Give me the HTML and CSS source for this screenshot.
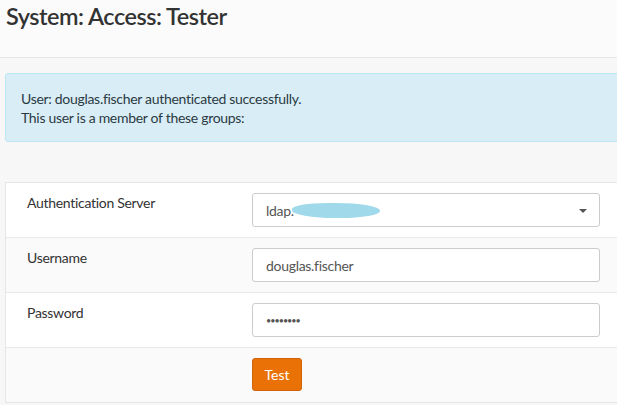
FILE: index.html
```html
<!DOCTYPE html>
<html lang="en">

<head>
    <meta charset="UTF-8">
    <meta name="viewport" content="width=device-width, initial-scale=1.0">
    <title>System: Access: Tester</title>
    <link rel="stylesheet" href="styles.css">
</head>

<body>
    <!-- page title bar -->
    <header class="page-head">
        <h1>System: Access: Tester</h1>
    </header>

    <main class="content">
        <!-- result message -->
        <div class="alert-info">
            User: douglas.fischer authenticated successfully.<br>
            This user is a member of these groups:
        </div>

        <!-- tester form -->
        <div class="form-card">
            <div class="form-row">
                <div class="form-label">Authentication Server</div>
                <div class="form-field">
                    <div class="select-box">
                        <span>ldap.</span><span class="smudge"></span>
                        <span class="caret"></span>
                    </div>
                </div>
            </div>
            <div class="form-row striped">
                <div class="form-label">Username</div>
                <div class="form-field">
                    <input type="text" class="text-input" value="douglas.fischer">
                </div>
            </div>
            <div class="form-row">
                <div class="form-label">Password</div>
                <div class="form-field">
                    <input type="password" class="text-input pass" value="12345678">
                </div>
            </div>
            <div class="form-row striped">
                <div class="form-label"></div>
                <div class="form-field">
                    <button type="button" class="btn-test">Test</button>
                </div>
            </div>
        </div>
    </main>
</body>

</html>
```

FILE: styles.css
```css
body {
    margin: 0;
    font-family: Lato, "Open Sans", Arial, sans-serif;
    font-size: 14px;
    letter-spacing: -0.3px;
    color: #333;
    background-color: #f7f7f7;
    overflow: hidden;
}

/* title bar */
.page-head {
    height: 57px;
    background-color: #fbfbfb;
    border-bottom: 1px solid #e6e6e6;
}

.page-head h1 {
    margin: 0;
    padding: 2px 0 0 6px;
    font-size: 23.5px;
    font-weight: 600;
    letter-spacing: -0.5px;
    line-height: 28px;
    color: #333;
}

.content {
    padding: 15px 0 0 5px;
    width: 660px;
}

.alert-info {
    background-color: #d9edf7;
    border: 1px solid #bce8f1;
    border-radius: 3px;
    padding: 15px 15px 20px 15px;
    line-height: 19px;
    color: #2b3a42;
    height: 32px;
}

/* form table */
.form-card {
    margin-top: 40px;
    background-color: #fff;
    border: 1px solid #e6e6e6;
    border-right: none;
}

.form-row {
    display: flex;
    height: 54px;
    border-top: 1px solid #e9e9e9;
}

.form-row:first-child {
    border-top: none;
}

.form-row.striped {
    background-color: #fafafa;
}

.form-label {
    width: 225px;
    padding: 10px 0 0 21px;
    line-height: 20px;
}

.form-field {
    padding-top: 10px;
}

.select-box,
.text-input {
    box-sizing: border-box;
    width: 348px;
    height: 34px;
    border: 1px solid #ccc;
    border-radius: 3px;
    background-color: #fff;
    font-family: inherit;
    font-size: 14px;
    letter-spacing: -0.3px;
    color: #555;
    padding: 0 13px;
}

.select-box {
    position: relative;
    display: flex;
    align-items: center;
}

.smudge {
    display: inline-block;
    width: 88px;
    height: 15px;
    margin-left: -2px;
    background-color: #9fd9ea;
    border-radius: 40% 50% 45% 50%;
}

.caret {
    position: absolute;
    right: 12px;
    top: 15px;
    border-left: 4px solid transparent;
    border-right: 4px solid transparent;
    border-top: 4px solid #555;
}

.text-input {
    display: block;
    outline: none;
}

.text-input.pass {
    font-size: 9px;
    letter-spacing: -1px;
}

.btn-test {
    width: 50px;
    height: 33px;
    background-color: #ea7105;
    border: 1px solid #d0630a;
    border-radius: 3px;
    color: #fff;
    font-family: inherit;
    font-size: 14px;
    padding: 0;
}
```
